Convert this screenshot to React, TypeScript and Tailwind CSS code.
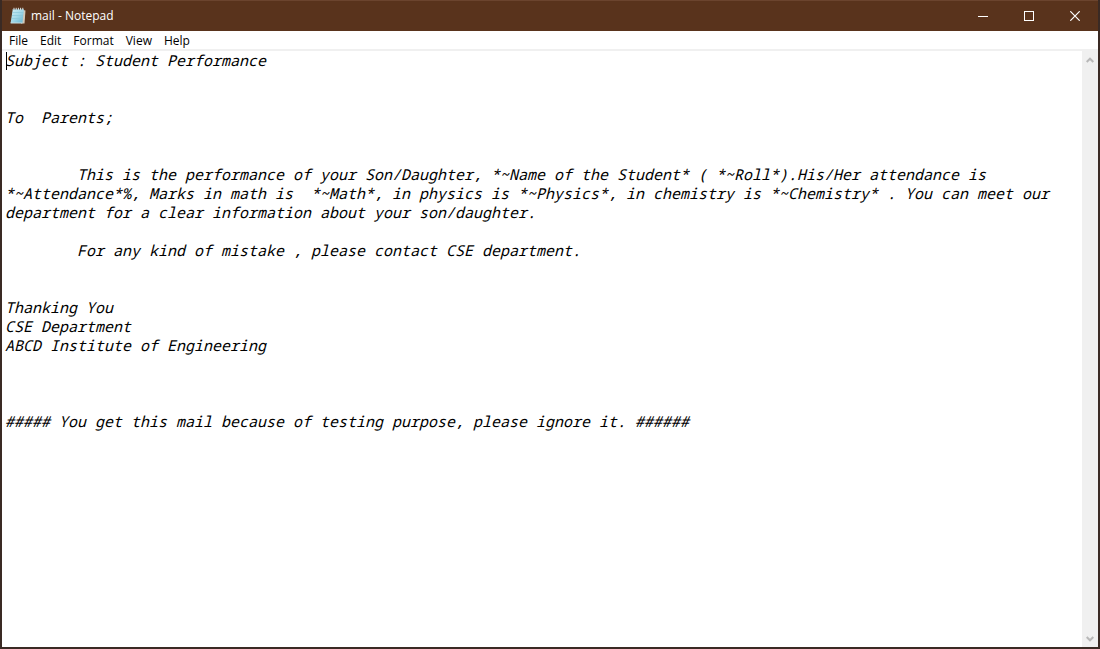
import React from "react";

const MENUS = ["File", "Edit", "Format", "View", "Help"];

const MAIL_TEXT = [
  "Subject : Student Performance",
  "",
  "",
  "To  Parents;",
  "",
  "",
  "\tThis is the performance of your Son/Daughter, *~Name of the Student* ( *~Roll*).His/Her attendance is *~Attendance*%, Marks in math is  *~Math*, in physics is *~Physics*, in chemistry is *~Chemistry* . You can meet our department for a clear information about your son/daughter.",
  "",
  "\tFor any kind of mistake , please contact CSE department.",
  "",
  "",
  "Thanking You",
  "CSE Department",
  "ABCD Institute of Engineering",
  "",
  "",
  "",
  "##### You get this mail because of testing purpose, please ignore it. ######",
].join("\n");

function NotepadIcon() {
  return (
    <svg width="16" height="18" viewBox="0 0 16 18" aria-hidden="true">
      <defs>
        <linearGradient id="page" x1="0" y1="0" x2="1" y2="1">
          <stop offset="0" stopColor="#d3eff5" />
          <stop offset="0.5" stopColor="#a3d8e8" />
          <stop offset="1" stopColor="#62b3cf" />
        </linearGradient>
      </defs>
      <path d="M13 3 L15.5 3.5 L14.5 16.5 L11 16.5 Z" fill="#d2c8b8" />
      <path d="M2.8 2 H14 L12.4 16 H0.6 Z" fill="url(#page)" />
      <path d="M2.4 5.5 H13.4 M2 8.5 H13 M1.6 11.5 H12.7" stroke="#8ac7da" strokeWidth="0.7" />
      <path d="M2.9 2.5 H14" stroke="#75939b" strokeWidth="1" />
      <path d="M4 0.8 V3 M6.2 0.8 V3 M8.4 0.8 V3 M10.6 0.8 V3 M12.8 0.8 V3" stroke="#dce5e6" strokeWidth="1" />
      <path d="M0.6 16 H12.4" stroke="#c9dde0" strokeWidth="1" />
    </svg>
  );
}

function Chevron({ down = false }: { down?: boolean }) {
  return (
    <svg width="8" height="6" viewBox="0 0 8 6" fill="none" stroke="#b8b8b8" strokeWidth="2" aria-hidden="true">
      <path d={down ? "M0.7 1 L4 4.3 L7.3 1" : "M0.7 5 L4 1.7 L7.3 5"} />
    </svg>
  );
}

function TitleBar() {
  return (
    <header className="flex h-[31px] shrink-0 items-center justify-between border-t border-[#6b442e] bg-[#59331c] pb-px pl-2 text-white">
      <div className="flex items-center gap-[5px]">
        <NotepadIcon />
        <h1 className="text-[12px] leading-4">mail - Notepad</h1>
      </div>
      <div className="flex h-full">
        <button type="button" aria-label="Minimize" className="flex w-[46px] items-center justify-center">
          <svg width="10" height="10" viewBox="0 0 10 10" stroke="currentColor" fill="none">
            <path d="M0 5.5 H10" />
          </svg>
        </button>
        <button type="button" aria-label="Maximize" className="flex w-[46px] items-center justify-center">
          <svg width="10" height="10" viewBox="0 0 10 10" stroke="currentColor" fill="none">
            <rect x="0.5" y="0.5" width="9" height="9" />
          </svg>
        </button>
        <button type="button" aria-label="Close" className="flex w-[46px] items-center justify-center">
          <svg width="10" height="10" viewBox="0 0 10 10" stroke="currentColor" strokeWidth="1.2" fill="none">
            <path d="M0.3 0.3 L9.7 9.7 M9.7 0.3 L0.3 9.7" />
          </svg>
        </button>
      </div>
    </header>
  );
}

function MenuBar() {
  return (
    <nav aria-label="Menu" className="flex h-[20px] shrink-0 items-end border-b-2 border-[#f0f0f0] bg-white pl-px text-black">
      {MENUS.map((name) => (
        <button key={name} type="button" className="px-[6px] text-[12px] leading-4">
          {name}
        </button>
      ))}
    </nav>
  );
}

export default function App() {
  return (
    <div className="h-screen border-x-2 border-b-2 border-t-0 border-[#3a2a24] bg-white font-['Open_Sans','Noto_Sans',sans-serif]">
      <div className="flex h-full flex-col">
        <TitleBar />
        <MenuBar />
        <main className="flex min-h-0 grow">
          <div className="relative flex min-w-0 grow">
            <textarea
              aria-label="Document text"
              spellCheck={false}
              defaultValue={MAIL_TEXT}
              className="w-full resize-none overflow-hidden bg-white px-[3px] font-['Noto_Sans_Mono','DejaVu_Sans_Mono',monospace] text-[15px] leading-[19px] italic text-black outline-none [tab-size:8]"
            />
            <span aria-hidden="true" className="absolute left-1 top-px h-[18px] w-px bg-black" />
          </div>
          <div className="flex w-4 shrink-0 flex-col justify-between bg-[#f0f0f0]">
            <button type="button" aria-label="Scroll up" className="flex h-[17px] items-center justify-center">
              <Chevron />
            </button>
            <button type="button" aria-label="Scroll down" className="flex h-[17px] items-center justify-center">
              <Chevron down />
            </button>
          </div>
        </main>
      </div>
    </div>
  );
}
